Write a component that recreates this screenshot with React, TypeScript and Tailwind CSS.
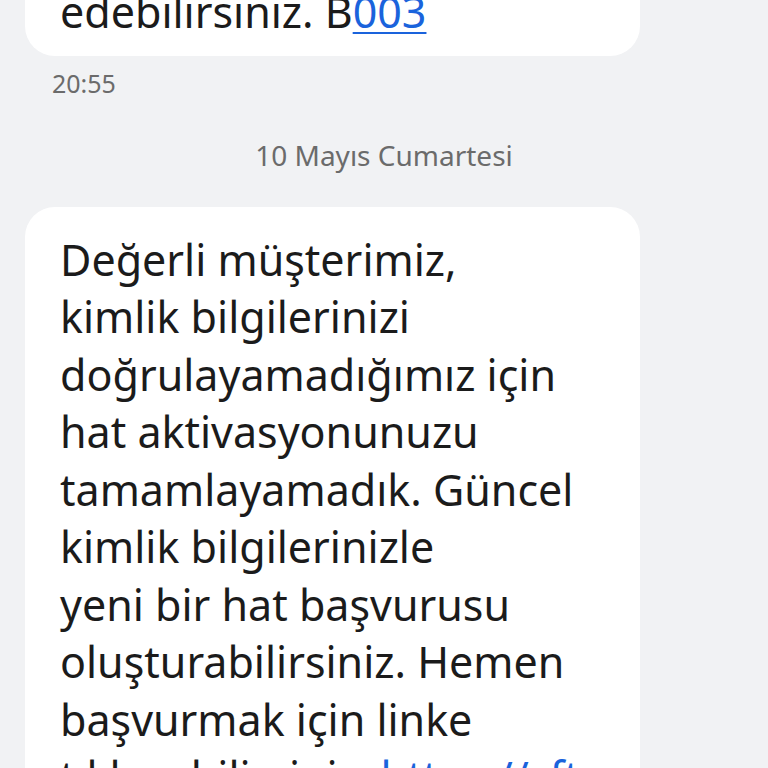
import React from 'react'

const lines = [
  'Değerli müşterimiz,',
  'kimlik bilgilerinizi',
  'doğrulayamadığımız için',
  'hat aktivasyonunuzu',
  'tamamlayamadık. Güncel',
  'kimlik bilgilerinizle',
  'yeni bir hat başvurusu',
  'oluşturabilirsiniz. Hemen',
  'başvurmak için linke',
]

export default function App() {
  return (
    <div className="h-[768px] w-[768px] overflow-hidden bg-[#f1f2f4] text-[#1b1b1b]"
      style={{ fontFamily: '"Noto Sans", Roboto, sans-serif' }}>

      {/* previous message, cut off at the top */}
      <div className="ml-[25px] mt-[-60px] w-[615px] rounded-b-[30px] bg-white pl-[35px] pr-6 pb-[15px] pt-[43px]">
        <p className="text-[43px] leading-[57.5px] whitespace-nowrap">
          edebilirsiniz. B<span className="text-[#1a63dc] underline underline-offset-[4px] decoration-2">003</span>
        </p>
      </div>

      <p className="ml-[52px] mt-[12px] text-[25px] leading-[30px] text-[#6b6b6b]">20:55</p>

      <p className="mt-[40px] text-center text-[28px] leading-[34px] text-[#6b6b6b]">10 Mayıs Cumartesi</p>

      {/* new message */}
      <div className="ml-[25px] mt-[35px] w-[615px] rounded-[30px] bg-white pl-[35px] pr-6 pt-[24px]">
        {lines.map(l => (
          <p key={l} className="text-[43px] leading-[57.5px] whitespace-nowrap">{l}</p>
        ))}
        <p className="text-[43px] leading-[57.5px] whitespace-nowrap">
          tıklayabilirsiniz: <span className="text-[#1a63dc]">https://sfte</span>
        </p>
      </div>
    </div>
  )
}
